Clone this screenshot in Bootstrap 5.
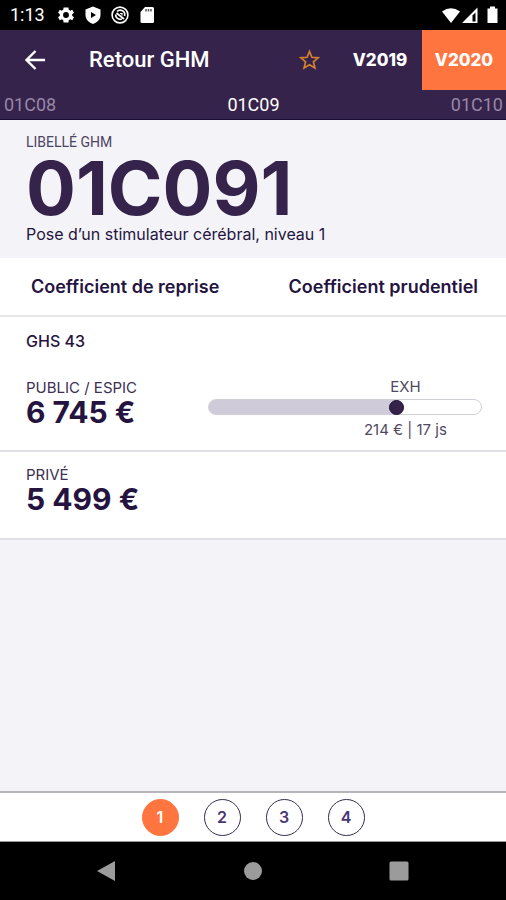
<!DOCTYPE html>
<html lang="fr">
<head>
<meta charset="utf-8">
<meta name="viewport" content="width=device-width, initial-scale=1">
<title>GHM 01C091</title>
<link href="https://cdn.jsdelivr.net/npm/bootstrap@5.3.0/dist/css/bootstrap.min.css" rel="stylesheet">
<style>
  :root { --plum: #36234b; --ink: #25143f; --orange: #ff7540; --mist: #f4f4f8; --line: #dfdfe5; }
  body { font-family: Roboto, "Liberation Sans", sans-serif; color: var(--ink); background: var(--mist); }
  button { border: 0; background: none; padding: 0; color: inherit; }
  svg { display: block; }
  .geo { font-family: Inter, "Open Sans", sans-serif; }
  .status-bar { height: 30px; padding: 0 8px 0 10px; font-size: 18px; line-height: 30px; }
  .status-bar .clock { width: 46px; }
  .top-bar { background: var(--plum); height: 60px; }
  .app-title { font-size: 22px; line-height: 30px; font-weight: 500; margin-left: 42px; }
  .back-btn { margin-left: 23px; }
  .version { width: 84px; font: 800 17px/24px Inter, sans-serif; }
  .version.active { background: var(--orange); }
  .codes { background: var(--plum); height: 30px; padding: 0 3px 0 4px; font-size: 18px; line-height: 30px; border-bottom: 1px solid #1c0d38; }
  .codes a { color: #9787a8; text-decoration: none; flex: 1; }
  .codes a.current { color: #fff; }
  .hero { padding: 12px 26px; height: 138px; }
  .caption { font: 14px/20px Roboto, sans-serif; color: #4c4460; }
  .code-title { font-size: 74px; line-height: 72px; font-weight: 700; color: var(--plum); margin: 0; }
  .desc { font-size: 16px; line-height: 20px; }
  .coefs { height: 59px; padding: 0 28px 0 31px; border-bottom: 2px solid #e6e6e8; }
  .coefs button { font-size: 18px; line-height: 24px; font-weight: 600; }
  .tariff { padding: 0 24px 10px 26px; border-bottom: 2px solid var(--line); }
  .tariff h2 { font-size: 16px; line-height: 24px; font-weight: 500; margin: 0; padding-top: 12px; }
  .kind { font-size: 15px; line-height: 21px; color: #3c3053; }
  .price { font-size: 30px; line-height: 29px; font-weight: 700; }
  .gauge { width: 60%; }
  .gauge-text { margin-left: 44%; font-size: 15px; line-height: 20px; color: #514962; text-align: center; }
  .gauge input { appearance: none; -webkit-appearance: none; display: block; width: 100%; height: 16px; margin: 2px 0 5px; background: linear-gradient(to right, #cfcbd9 70%, #fff 70%); border: 1px solid #d2cfda; border-radius: 8px; }
  .gauge input::-webkit-slider-thumb { -webkit-appearance: none; width: 15px; height: 15px; border-radius: 50%; background: var(--plum); border: 1px solid #1c0d38; }
  .gauge input::-moz-range-thumb { width: 15px; height: 15px; border-radius: 50%; background: var(--plum); border: 1px solid #1c0d38; }
  .pager { height: 51px; border-top: 2px solid #b5b5ba; border-bottom: 1px solid #999; gap: 25px; }
  .pager button { width: 37px; height: 37px; border-radius: 50%; border: 1px solid #352d52; color: #493774; font: 600 16px/20px Inter, sans-serif; }
  .pager button.active { background: var(--orange); border-color: var(--orange); color: #fff; }
  .system-nav { height: 58px; padding: 0 96px; }
</style>
</head>
<body>
<div class="d-flex flex-column min-vh-100">
  <div class="status-bar bg-black text-white d-flex align-items-center">
    <span class="clock">1:13</span>
    <div class="d-flex align-items-center gap-2">
      <svg width="20" height="20" viewBox="0 0 24 24" fill="#fff" aria-hidden="true"><path fill-rule="evenodd" d="M19.400 13a7.500 7.500 0 0 0 0-2l2.100-1.700-2-3.500-2.500 1a7 7 0 0 0-1.700-1L14.900 3h-5.800l-.4 2.800a7 7 0 0 0-1.700 1l-2.500-1-2 3.500L4.600 11a7.500 7.500 0 0 0 0 2l-2.100 1.700 2 3.500 2.500-1a7 7 0 0 0 1.700 1l.4 2.800h5.800l.4-2.800a7 7 0 0 0 1.700-1l2.500 1 2-3.500zM12 15.500a3.500 3.500 0 1 1 0-7 3.500 3.500 0 0 1 0 7z"/></svg>
      <svg width="18" height="20" viewBox="0 0 18 20" fill="#fff" aria-hidden="true"><path fill-rule="evenodd" d="M9 1.500l7.500 3v5.500c0 4-3 7.500-7.500 9C4.500 17.500 1.500 14 1.500 10V4.500zM7 7v6l5-3z"/></svg>
      <svg width="20" height="20" viewBox="0 0 20 20" fill="none" stroke="#fff" aria-hidden="true"><circle cx="10" cy="10" r="7.900" stroke-width="1.600"/><path d="M6.500 8l7.500 6M7 6.500A4.500 4.500 0 0 1 14.500 11M5.700 9.500a4.400 4.400 0 0 0 6 4.500" stroke-width="1.700"/><path d="M10 8.500h2v2" stroke-width="1.200"/></svg>
      <svg width="18" height="20" viewBox="0 0 18 20" aria-hidden="true"><path d="M7 2h7.500A1.500 1.500 0 0 1 16 3.500v13a1.500 1.500 0 0 1-1.500 1.500H4a1.500 1.500 0 0 1-1.500-1.500V7z" fill="#fff"/><path d="M8 4v2.500M10.500 4v2.500M13 4v2.500" stroke="#555" stroke-width="1.500"/></svg>
    </div>
    <div class="d-flex align-items-center ms-auto">
      <svg width="20" height="20" viewBox="0 0 20 20" fill="#fff" aria-hidden="true"><path d="M1 6.500Q10 0 19 6.500L10 18z"/></svg>
      <svg width="18" height="20" viewBox="0 0 18 20" aria-hidden="true"><path d="M1 18L16.500 2.500V18z" fill="#fff"/><path d="M11.500 10.500L14.500 7.500V16.500H11.500z" fill="#000"/></svg>
      <svg class="ms-2" width="11" height="20" viewBox="0 0 11 20" fill="#fff" aria-hidden="true"><path d="M3 1.500h5v2h2.500V18H.5V3.500H3z"/></svg>
    </div>
  </div>

  <header class="top-bar text-white d-flex align-items-center">
    <button class="back-btn" aria-label="Retour"><svg width="24" height="24" viewBox="0 0 24 24" fill="none" stroke="#fff" stroke-width="2.400" aria-hidden="true"><path d="M22 12H3.500M12.500 3L3.500 12l9 9"/></svg></button>
    <h1 class="app-title mb-0">Retour GHM</h1>
    <button class="ms-auto me-3" aria-label="Favori"><svg width="24" height="24" viewBox="0 0 24 24" fill="none" stroke="#d3802f" stroke-width="1.700" aria-hidden="true"><path d="M11.500 3.500l2.400 5.800 6.200.5-4.700 4 1.500 6.200-5.400-3.300L6.100 20l1.500-6.200-4.700-4 6.200-.5z"/></svg></button>
    <button class="version h-100">V2019</button>
    <button class="version active h-100">V2020</button>
  </header>
  <nav class="codes d-flex" aria-label="Codes">
    <a href="#c08">01C08</a>
    <a href="#c09" class="current text-center" aria-current="page">01C09</a>
    <a href="#c10" class="text-end">01C10</a>
  </nav>

  <main class="flex-grow-1">
    <section class="hero geo">
      <div class="caption">LIBELLÉ GHM</div>
      <h2 class="code-title">01C091</h2>
      <div class="desc">Pose d’un stimulateur cérébral, niveau 1</div>
    </section>
    <div class="coefs geo bg-white d-flex align-items-center justify-content-between">
      <button>Coefficient de reprise</button>
      <button>Coefficient prudentiel</button>
    </div>
    <section class="tariff geo bg-white">
      <h2>GHS 43</h2>
      <div class="d-flex justify-content-between pt-4">
        <div>
          <div class="kind">PUBLIC / ESPIC</div>
          <div class="price">6 745 €</div>
        </div>
        <div class="gauge">
          <label class="gauge-text d-block" for="exh">EXH</label>
          <input id="exh" type="range" min="0" max="100" value="70">
          <div class="gauge-text">214 € | 17 js</div>
        </div>
      </div>
    </section>
    <section class="tariff geo bg-white pt-2 pb-4">
      <div class="kind pt-1">PRIVÉ</div>
      <div class="price">5 499 €</div>
    </section>
  </main>

  <nav class="pager bg-white d-flex align-items-center justify-content-center" aria-label="Niveaux">
    <button class="active" aria-current="true">1</button>
    <button>2</button>
    <button>3</button>
    <button>4</button>
  </nav>
  <nav class="system-nav bg-black d-flex align-items-center justify-content-between" aria-label="Système">
    <button aria-label="Précédent"><svg width="22" height="22" viewBox="0 0 22 22" fill="#9b9b9b" aria-hidden="true"><path d="M19 1v20L1 11z"/></svg></button>
    <button aria-label="Accueil"><svg width="20" height="20" viewBox="0 0 20 20" fill="#9b9b9b" aria-hidden="true"><circle cx="10" cy="10" r="9"/></svg></button>
    <button aria-label="Applications"><svg width="22" height="22" viewBox="0 0 22 22" fill="#9b9b9b" aria-hidden="true"><rect x="1.500" y="1.500" width="19" height="19" rx="1.500"/></svg></button>
  </nav>
</div>
<script src="https://cdn.jsdelivr.net/npm/bootstrap@5.3.0/dist/js/bootstrap.bundle.min.js"></script>
</body>
</html>
